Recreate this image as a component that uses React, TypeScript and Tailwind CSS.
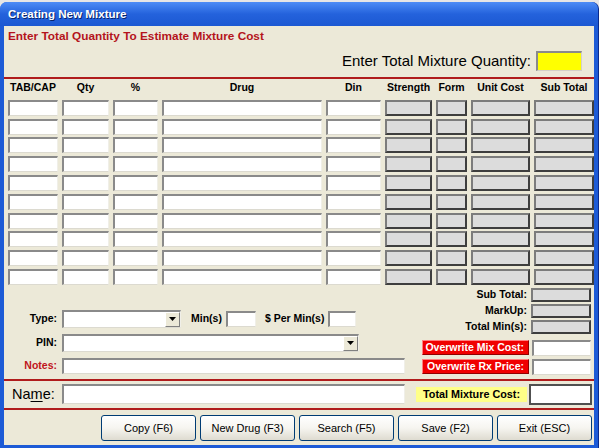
import React from "react";

const sunken =
  "bg-white border-t-2 border-l-2 border-b border-r border-t-[#8a8a8a] border-l-[#8a8a8a] border-b-[#dcdad0] border-r-[#f0efe8]";
const grayBox =
  "bg-[#dcdcdc] border-2 border-t-[#7c7c7c] border-l-[#7c7c7c] border-b-[#3e3e3e] border-r-[#3e3e3e]";

const cols = ["TAB/CAP", "Qty", "%", "Drug", "Din", "Strength", "Form", "Unit Cost", "Sub Total"];

function Arrow() {
  return (
    <div className="w-[15px] h-full flex items-center justify-center bg-[#ece9d8] border-l border-t border-l-white border-t-white border-r border-b border-r-[#808080] border-b-[#808080]">
      <svg width="7" height="4" viewBox="0 0 7 4">
        <path d="M0 0h7L3.5 4z" fill="#000" />
      </svg>
    </div>
  );
}

function Btn({ label }: { label: string }) {
  return (
    <div className="w-[95px] h-[26px] rounded-[3px] border border-[#003c74] bg-gradient-to-b from-white via-[#f6f5f0] to-[#dedbd0] flex items-center justify-center text-[11px] text-black font-['Liberation_Sans_Narrow','Liberation_Sans',sans-serif]">
      {label}
    </div>
  );
}

export default function App() {
  const rows = Array.from({ length: 10 });
  return (
    <div className="w-[599px] h-[448px] bg-[#e6e6e6] overflow-hidden font-['Liberation_Sans',Arial,sans-serif]">
      <div className="h-[2px]" />
      <div className="h-[446px] flex flex-col rounded-t-[7px] bg-[#1d5bd6] border-r border-r-[#0a2a8c] px-[4px] pb-[3px]">
        {/* title bar */}
        <div className="h-[24px] -mx-[4px] px-[8px] rounded-t-[7px] bg-gradient-to-b from-[#4d8cf6] via-[#2462dc] to-[#1c58d2] flex items-center">
          <span className="text-white font-bold text-[11.6px] [text-shadow:1px_1px_0_#0a246a]">
            Creating New Mixture
          </span>
        </div>
        {/* content */}
        <div className="flex-1 bg-[#ece9d8] flex flex-col">
          <div className="h-[22px] pl-[4px] flex items-center text-[#b4141c] font-bold text-[11.8px]">
            Enter Total Quantity To Estimate Mixture Cost
          </div>
          <div className="h-[20px] mt-[3px] flex justify-end items-center pr-[12px] gap-[5px]">
            <span className="text-[15px] text-black">Enter Total Mixture Quantity:</span>
            <div className="w-[46px] h-[20px] bg-[#ffff00] border-t-2 border-l-2 border-b border-r border-t-[#8a8a8a] border-l-[#8a8a8a] border-b-[#d4d0c8] border-r-[#d4d0c8]" />
          </div>
          <div className="mt-[6px] h-[2px] bg-[#b01c1c]" />
          <div className="pl-[4px] grid grid-cols-[50px_47px_45px_160px_55px_47px_31px_59px_60px] gap-x-[4px] gap-y-[2.8px] grid-rows-[18px]">
            {cols.map((c) => (
              <div key={c} className="h-[18px] flex items-center justify-center text-[10.5px] font-bold text-black">
                {c}
              </div>
            ))}
            {rows.map((_, r) =>
              cols.map((c, i) => (
                <div key={r + c} className={"h-[16px] " + (i < 5 ? sunken : grayBox)} />
              ))
            )}
          </div>
          {/* bottom section */}
          <div className="h-[94px] flex items-end justify-between pb-[4px]">
            <div className="flex flex-col gap-[6px] pb-[1px] text-[10.5px] font-bold">
              <div className="flex items-center h-[18px]">
                <span className="w-[53px] text-right">Type:</span>
                <div className={"ml-[5px] w-[119px] h-[18px] flex justify-end " + sunken}>
                  <Arrow />
                </div>
                <span className="ml-[10px]">Min(s)</span>
                <div className={"ml-[4px] w-[30px] h-[16px] " + sunken} />
                <span className="ml-[9px]">$ Per Min(s)</span>
                <div className={"ml-[4px] w-[28px] h-[16px] " + sunken} />
              </div>
              <div className="flex items-center h-[18px]">
                <span className="w-[53px] text-right">PIN:</span>
                <div className={"ml-[5px] w-[297px] h-[18px] flex justify-end " + sunken}>
                  <Arrow />
                </div>
              </div>
              <div className="flex items-center h-[16px]">
                <span className="w-[53px] text-right text-[#c0141c]">Notes:</span>
                <div className={"ml-[5px] w-[343px] h-[16px] " + sunken} />
              </div>
            </div>
            <div className="flex flex-col items-end pr-[3px] text-[10.5px] font-bold">
              <div className="flex flex-col gap-[2px]">
                {["Sub Total:", "MarkUp:", "Total Min(s):"].map((l) => (
                  <div key={l} className="flex items-center justify-end gap-[4px] h-[14px]">
                    <span>{l}</span>
                    <div className={"w-[60px] h-[14px] " + grayBox} />
                  </div>
                ))}
              </div>
              <div className="mt-[6px] flex flex-col gap-[3px]">
                {["Overwrite Mix Cost:", "Overwrite Rx Price:"].map((l) => (
                  <div key={l} className="flex items-center justify-end gap-[3px] h-[16px]">
                    <div className="w-[107px] h-[15px] bg-[#f00000] text-white flex items-center justify-end pr-[4px] border-t border-l border-t-[#ff8080] border-l-[#ff8080] border-b border-r border-b-[#900000] border-r-[#900000]">
                      {l}
                    </div>
                    <div className={"w-[59px] h-[16px] " + sunken} />
                  </div>
                ))}
              </div>
            </div>
          </div>
          <div className="h-[2px] bg-[#b01c1c]" />
          {/* name row */}
          <div className="h-[27px] flex items-center">
            <span className="pl-[8px] w-[58px] text-[14.5px] text-black">
              Na<span className="underline underline-offset-2">m</span>e:
            </span>
            <div className={"w-[343px] h-[20px] " + sunken} />
            <div className="ml-[11px] w-[111px] h-[15px] bg-[#ffff88] flex items-center justify-center text-[10.8px] font-bold">
              Total Mixture Cost:
            </div>
            <div className="ml-[2px] w-[63px] h-[21px] bg-white border-2 border-[#505050]" />
          </div>
          <div className="h-[2px] bg-[#b01c1c]" />
          <div className="mt-[5px] flex justify-end gap-[4px] pr-[2px]">
            <Btn label="Copy (F6)" />
            <Btn label="New Drug (F3)" />
            <Btn label="Search (F5)" />
            <Btn label="Save (F2)" />
            <Btn label="Exit (ESC)" />
          </div>
        </div>
      </div>
    </div>
  );
}
